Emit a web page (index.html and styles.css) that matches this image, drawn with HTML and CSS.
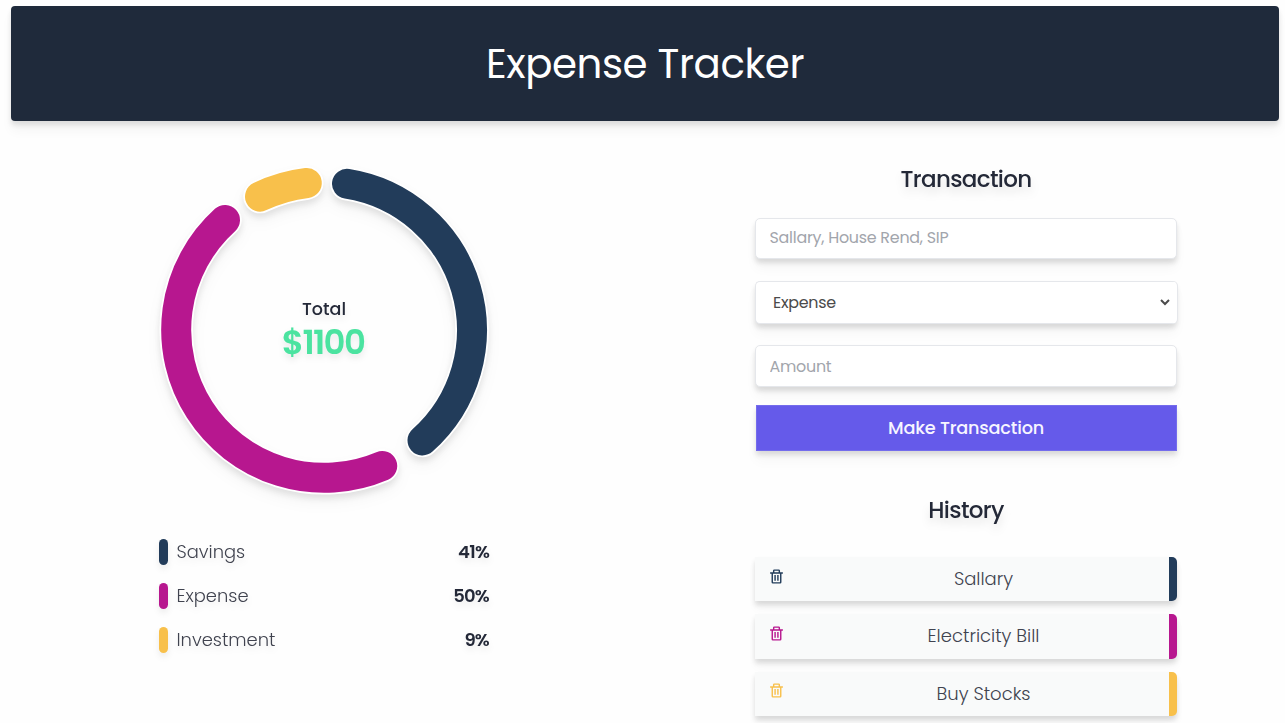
FILE: index.html
```html
<!DOCTYPE html>
<html lang="en">
<head>
<meta charset="utf-8">
<title>Expense Tracker</title>
<link rel="stylesheet" href="styles.css">
</head>
<body>
<svg class="sprite" aria-hidden="true"><symbol id="trash" viewBox="0 0 24 24"><path d="M5 20a2 2 0 0 0 2 2h10a2 2 0 0 0 2-2V8h2V6h-4V4a2 2 0 0 0-2-2H9a2 2 0 0 0-2 2v2H3v2h2zM9 4h6v2H9zM8 8h9v12H7V8z"/><path d="M9 10h2v8H9zm4 0h2v8h-2z"/></symbol></svg>
<header class="banner"><h1 class="title">Expense Tracker</h1></header>
<main class="layout">
  <section class="overview">
    <div class="chart">
      <svg class="ring" width="330" height="330" viewBox="-165 -165 330 330">
        <g class="ring-edge">
          <path d="M23-146.2A148 148 0 0 1 98.5 110.4"/>
          <path d="M58.2 136A148 148 0 0 1-99-110"/>
          <path d="M-64-133.4A148 148 0 0 1-17.2-147"/>
        </g>
        <g class="ring-fill">
          <path class="savings" d="M23-146.2A148 148 0 0 1 98.5 110.4"/>
          <path class="expense" d="M58.2 136A148 148 0 0 1-99-110"/>
          <path class="investment" d="M-64-133.4A148 148 0 0 1-17.2-147"/>
        </g>
      </svg>
      <div class="total"><span class="total-label">Total</span><span class="total-value">$1100</span></div>
    </div>
    <ul class="legend">
      <li class="legend-row savings"><i class="pill"></i><span class="name">Savings</span><b class="percent">41%</b></li>
      <li class="legend-row expense"><i class="pill"></i><span class="name">Expense</span><b class="percent">50%</b></li>
      <li class="legend-row investment"><i class="pill"></i><span class="name">Investment</span><b class="percent">9%</b></li>
    </ul>
  </section>
  <section class="panel">
    <h2 class="heading">Transaction</h2>
    <form class="form">
      <input class="field" type="text" placeholder="Sallary, House Rend, SIP">
      <select class="field select"><option>Expense</option><option>Savings</option><option>Investment</option></select>
      <input class="field amount" type="text" placeholder="Amount">
      <button class="submit" type="button">Make Transaction</button>
    </form>
    <h2 class="heading history-heading">History</h2>
    <ul class="history">
      <li class="item savings"><svg class="trash"><use href="#trash"/></svg><span class="item-name">Sallary</span></li>
      <li class="item expense"><svg class="trash"><use href="#trash"/></svg><span class="item-name">Electricity Bill</span></li>
      <li class="item investment"><svg class="trash"><use href="#trash"/></svg><span class="item-name">Buy Stocks</span></li>
    </ul>
  </section>
</main>
</body>
</html>
```
FILE: styles.css
```css
* { box-sizing: border-box; }
html { overflow: hidden; }
body { margin: 0; padding-top: 6px; height: 723px; overflow: hidden; background: #fefefe; color: #242938; font-family: Poppins, Inter, sans-serif; }
h1, h2, ul { margin: 0; padding: 0; list-style: none; }
.sprite { display: none; }
.savings { --tone: #223c5a; }
.expense { --tone: #b7178f; }
.investment { --tone: #f8c04b; }
.banner { display: flex; align-items: center; justify-content: center; height: 115px; margin: 0 6px 0 11px; padding-top: 1px; border-radius: 4px; background: #1f2a3b; box-shadow: 0 10px 12px rgb(0 0 0 / .04), 0 4px 5px rgb(0 0 0 / .1); }
.title { color: #fff; font-size: 40.3px; font-weight: 400; line-height: 60px; letter-spacing: -.4px; }
.layout { display: grid; grid-template-columns: 642px 642px; padding-left: 3px; }
.overview { display: flex; flex-direction: column; align-items: center; padding-top: 44px; }
.chart { display: grid; place-items: center; width: 330px; height: 330px; }
.chart > * { grid-area: 1 / 1; }
.ring { overflow: visible; filter: drop-shadow(0 8px 7px rgb(0 0 0 / .04)) drop-shadow(0 4px 3px rgb(0 0 0 / .09)); }
.ring path { fill: none; stroke-linecap: round; }
.ring-edge path { stroke: #fff; stroke-width: 33.5; }
.ring-fill path { stroke: var(--tone); stroke-width: 30; }
.total { display: flex; flex-direction: column; align-items: center; filter: drop-shadow(0 4px 3px rgb(0 0 0 / .08)); }
.total-label { font-size: 17.5px; font-weight: 500; line-height: 27px; }
.total-value { margin: -1px 2px 2px 0; color: #4be3a0; font-size: 34px; font-weight: 600; line-height: 40px; letter-spacing: -1.7px; }
.legend { display: flex; flex-direction: column; gap: 18px; width: 330px; padding-top: 44px; }
.legend-row { display: flex; align-items: center; height: 26px; filter: drop-shadow(0 4px 3px rgb(0 0 0 / .07)); }
.pill { width: 9px; height: 26px; margin-right: 8.5px; border-radius: 4.5px; background: var(--tone); }
.name { flex: 1; padding-bottom: 2px; color: #40434f; font-size: 17.9px; font-weight: 300; }
.percent { padding-bottom: 2px; font-size: 18px; font-weight: 600; letter-spacing: -.8px; }
.panel { padding: 41px 110px 0 110px; }
.heading { font-size: 23px; font-weight: 500; line-height: 34px; letter-spacing: -.65px; text-align: center; filter: drop-shadow(0 6px 4px rgb(0 0 0 / .1)); }
.form { display: flex; flex-direction: column; padding-top: 22px; }
.field, .submit { font-family: inherit; box-shadow: 0 10px 12px rgb(0 0 0 / .03), 0 4px 5px rgb(0 0 0 / .12); }
.field { width: 100%; height: 41px; margin-bottom: 21.5px; padding: 0 13.5px 2px; border: 1px solid #e5e7eb; border-radius: 5px; background: #fff; color: #4b4b4b; font-size: 15.9px; letter-spacing: -.25px; }
.field::placeholder { color: #a2a5ac; }
.select { height: 43px; padding: 0 0 0 13px; border-right-width: 4px; border-right-color: #fff; box-shadow: 1px 0 0 #e5e7eb, 0 10px 12px rgb(0 0 0 / .03), 0 4px 5px rgb(0 0 0 / .12); }
.amount { height: 42px; margin-bottom: 18px; padding-bottom: 0; }
.submit { height: 46px; margin: 0 .5px; padding: 0 0 1px; border: 1px solid #746cec; background: #655aea; color: #f7f5ff; font-size: 17.7px; font-weight: 500; letter-spacing: -.2px; }
.history-heading { margin-top: 42px; }
.history { display: flex; flex-direction: column; gap: 13px; padding-top: 30px; }
.item { display: flex; height: 44.3px; padding-left: 13px; border-right: 8px solid var(--tone); border-radius: 0 5px 5px 0; background: #f9fafa; box-shadow: 0 8px 10px rgb(0 0 0 / .03), 0 4px 5px rgb(0 0 0 / .12); }
.trash { width: 17px; height: 17px; margin-top: 10.5px; fill: var(--tone); }
.item-name { flex: 1; padding-left: 13px; color: #40434f; font-size: 18px; font-weight: 300; line-height: 44px; text-align: center; }
```
